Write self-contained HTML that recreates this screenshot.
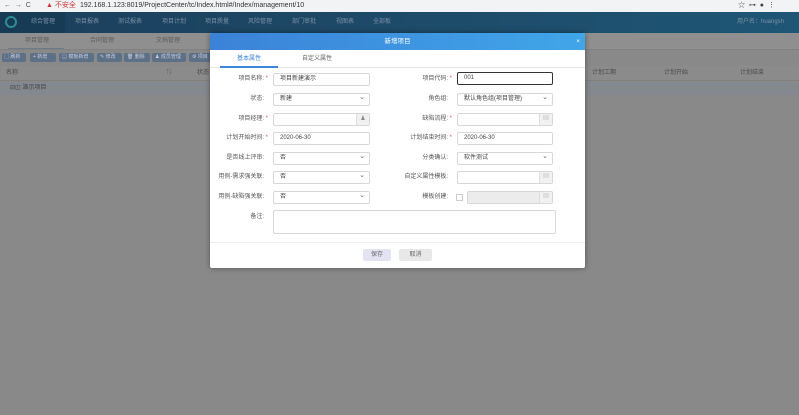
<!DOCTYPE html>
<html><head><meta charset="utf-8"><style>
*{box-sizing:border-box;margin:0;padding:0}
body{width:799px;height:415px;overflow:hidden;background:#898989;font-family:"Liberation Sans","Noto Sans CJK SC",sans-serif;font-size:6px;color:#333;position:relative}
.abs{position:absolute}
.lbl{position:absolute;text-align:right;width:90px;color:#555;font-size:6px;line-height:13px}
.inp{position:absolute;height:13px;background:#fff;border:1px solid #d8d8d8;border-radius:2px;font-size:6px;line-height:11px;padding-left:6px;color:#444}
.sel::after{content:"⌄";position:absolute;right:4px;top:-2px;color:#666;font-size:7px}
.btnic{position:absolute;right:0;top:0;width:13px;height:11px;background:#f1f1f1;border-left:1px solid #ddd}
.star{color:#e55}
</style></head><body>
<div class="abs" style="left:0;top:0;width:799px;height:12px;background:#f1f3f4;font-size:7px;line-height:12px;color:#555">
<span class="abs" style="left:4px">←&nbsp;&nbsp;→&nbsp;&nbsp;C</span>
<span class="abs" style="left:46px;color:#c33">▲ 不安全</span>
<span class="abs" style="left:80px;color:#333">192.168.1.123:8019/ProjectCenter/tc/Index.html#/Index/management/10</span>
<span class="abs" style="left:738px;color:#444">☆&nbsp;&nbsp;⊶&nbsp;&nbsp;●&nbsp;&nbsp;⋮</span>
</div>
<div class="abs" style="left:0;top:12px;width:799px;height:21px;background:linear-gradient(90deg,#1b3f5c,#1f5675)"></div>
<div class="abs" style="left:0;top:12px;width:22px;height:21px;background:#183b55"></div>
<div class="abs" style="left:5px;top:16px;width:12px;height:12px;border-radius:50%;border:2px solid #2f8c96"></div>
<div class="abs" style="left:22px;top:12px;width:43px;height:21px;background:#173a55"></div>
<div class="abs" style="top:12px;left:0;height:21px;line-height:21px;color:#7d90a5;font-size:6px;width:799px">
<span class="abs" style="left:31px">综合管理</span><span class="abs" style="left:75px">项目报表</span><span class="abs" style="left:118px">测试报表</span><span class="abs" style="left:162px">项目计划</span><span class="abs" style="left:205px">项目质量</span><span class="abs" style="left:248px">风险管理</span><span class="abs" style="left:292px">部门审批</span><span class="abs" style="left:336px">视图表</span><span class="abs" style="left:373px">全部板</span><span class="abs" style="left:737px">用户名：huangsh</span></div>
<div class="abs" style="left:0;top:33px;width:799px;height:17px;background:#8f8f8f;border-bottom:1px solid #818181"></div>
<div class="abs" style="left:8px;top:48px;width:56px;height:1px;background:#6a7a8a"></div>
<div class="abs" style="top:33px;line-height:17px;color:#5c5c5c;width:300px;height:17px"><span class="abs" style="left:25px">项目管理</span><span class="abs" style="left:90px">合同管理</span><span class="abs" style="left:156px">文档管理</span></div>
<div class="abs" style="left:2px;top:53px;height:9px;font-size:5px;line-height:9px;color:#ccd">
<span class="abs" style="left:0;width:24px;height:9px;background:#5c7087;border-radius:2px;padding-left:2px">▢ 刷新</span>
<span class="abs" style="left:28px;width:26px;height:9px;background:#5c7087;border-radius:2px;padding-left:3px">+ 新增</span>
<span class="abs" style="left:57px;width:35px;height:9px;background:#5c7087;border-radius:2px;padding-left:3px">▤ 模板新增</span>
<span class="abs" style="left:95px;width:25px;height:9px;background:#5c7087;border-radius:2px;padding-left:3px">✎ 修改</span>
<span class="abs" style="left:122px;width:26px;height:9px;background:#5c7087;border-radius:2px;padding-left:3px">🗑 删除</span>
<span class="abs" style="left:150px;width:34px;height:9px;background:#5c7087;border-radius:2px;padding-left:3px">♟ 成员管理</span>
<span class="abs" style="left:187px;width:25px;height:9px;background:#5c7087;border-radius:2px;padding-left:3px">⚙ 项目</span>
</div>
<div class="abs" style="left:0;top:66px;width:799px;height:15px;background:#8b8b8b;border-bottom:1px solid #7f7f7f;line-height:15px;color:#4a4a4a">
<span class="abs" style="left:6px">名称</span><span class="abs" style="left:166px;color:#667">⇅</span><span class="abs" style="left:197px">状态</span>
<span class="abs" style="left:592px">计划工期</span><span class="abs" style="left:664px">计划开始</span><span class="abs" style="left:740px">计划结束</span></div>
<div class="abs" style="left:0;top:82px;width:799px;height:13px;background:#84898f;line-height:13px;color:#444"><span class="abs" style="left:10px">⊟◫ 演示项目</span></div>
<div class="abs" style="left:210px;top:33px;width:375px;height:235px;background:#fff;border-radius:2px;box-shadow:0 0 6px rgba(0,0,0,.4)">
<div class="abs" style="left:0;top:0;width:375px;height:17px;background:linear-gradient(90deg,#3b82d8,#40a6e8);color:#fff;text-align:center;line-height:17px;font-size:6.5px;border-radius:2px 2px 0 0">新增项目<span class="abs" style="right:5px;top:0">×</span></div>
<div class="abs" style="left:0;top:17px;width:375px;height:18px;border-bottom:1px solid #e4e4e4;line-height:18px;font-size:6px">
<span class="abs" style="left:27px;color:#3a86d8">基本属性</span><span class="abs" style="left:92px;color:#666">自定义属性</span>
<div class="abs" style="left:10px;top:16px;width:58px;height:2px;background:#3a86d8"></div></div>
</div>
<div class="lbl" style="left:178px;top:73px">项目名称: <span class="star">*</span></div>
<div class="inp" style="left:273px;top:73px;width:97px">项目新建演示</div>
<div class="lbl" style="left:362px;top:73px">项目代码: <span class="star">*</span></div>
<div class="inp" style="left:457px;top:72px;width:96px;border:1px solid #333">001</div>

<div class="lbl" style="left:174px;top:93px">状态:</div>
<div class="inp sel" style="left:273px;top:93px;width:97px">新建</div>
<div class="lbl" style="left:358px;top:93px">角色组:</div>
<div class="inp sel" style="left:457px;top:93px;width:96px">默认角色组(项目管理)</div>

<div class="lbl" style="left:178px;top:113px">项目经理: <span class="star">*</span></div>
<div class="inp" style="left:273px;top:113px;width:97px"><div class="btnic" style="text-align:center;color:#888">♟</div></div>
<div class="lbl" style="left:362px;top:113px">缺陷流程: <span class="star">*</span></div>
<div class="inp" style="left:457px;top:113px;width:96px"><div class="btnic" style="text-align:center;color:#aaa">▤</div></div>

<div class="lbl" style="left:178px;top:132px">计划开始时间: <span class="star">*</span></div>
<div class="inp" style="left:273px;top:132px;width:97px">2020-06-30</div>
<div class="lbl" style="left:362px;top:132px">计划结束时间: <span class="star">*</span></div>
<div class="inp" style="left:457px;top:132px;width:96px">2020-06-30</div>

<div class="lbl" style="left:174px;top:152px">是否线上评审:</div>
<div class="inp sel" style="left:273px;top:152px;width:97px">否</div>
<div class="lbl" style="left:358px;top:152px">分类确认:</div>
<div class="inp sel" style="left:457px;top:152px;width:96px">软件测试</div>

<div class="lbl" style="left:174px;top:171px">用例-需求强关联:</div>
<div class="inp sel" style="left:273px;top:171px;width:97px">否</div>
<div class="lbl" style="left:358px;top:171px">自定义属性模板:</div>
<div class="inp" style="left:457px;top:171px;width:96px"><div class="btnic" style="text-align:center;color:#aaa">▤</div></div>

<div class="lbl" style="left:174px;top:191px">用例-缺陷强关联:</div>
<div class="inp sel" style="left:273px;top:191px;width:97px">否</div>
<div class="lbl" style="left:358px;top:191px">模板创建:</div>
<div class="abs" style="left:456px;top:194px;width:7px;height:7px;border:1px solid #ccc;background:#fff"></div>
<div class="inp" style="left:467px;top:191px;width:86px;background:#ececec"><div class="btnic" style="text-align:center;color:#aaa">▤</div></div>

<div class="lbl" style="left:174px;top:211px">备注:</div>
<div class="inp" style="left:273px;top:210px;width:283px;height:24px"></div>

<div class="abs" style="left:210px;top:242px;width:375px;height:1px;background:#eee"></div>
<div class="abs" style="left:363px;top:249px;width:28px;height:12px;background:#e3e3f3;border-radius:2px;text-align:center;line-height:12px;color:#666">保存</div>
<div class="abs" style="left:399px;top:249px;width:33px;height:12px;background:#e8e8e8;border-radius:2px;text-align:center;line-height:12px;color:#666">取消</div>
</body></html>
